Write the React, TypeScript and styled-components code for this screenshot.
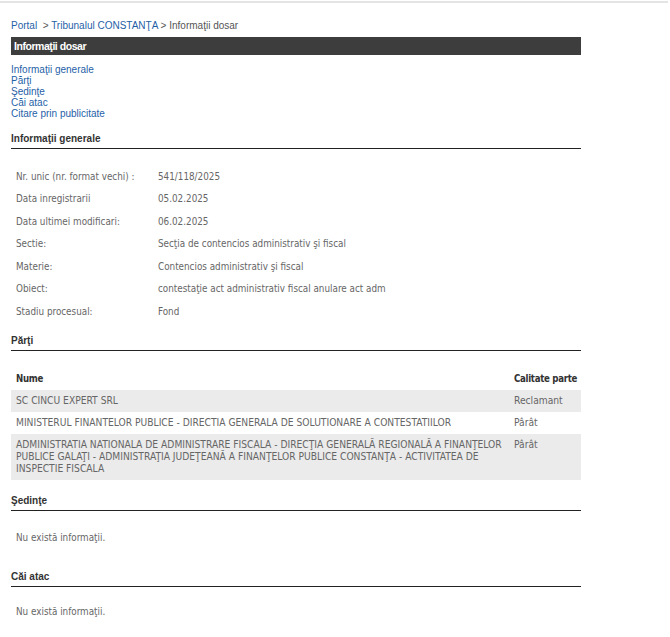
import React from "react";
import styled, { createGlobalStyle } from "styled-components";

const Global = createGlobalStyle`
  html, body { margin: 0; padding: 0; background: #ffffff; }
  body { font-family: "Liberation Sans", Arial, sans-serif; }
`;

const TopRule = styled.div`
  margin-top: 1px;
  width: 668px;
  height: 2px;
  background: #e4e4e4;
`;

const Page = styled.div`
  width: 570px;
  margin-left: 11px;
`;

const Breadcrumb = styled.div`
  margin-top: 16px;
  font-size: 10px;
  line-height: 13px;
  color: #555;
`;

const Link = styled.a`
  color: #1f5fa8;
  text-decoration: none;
`;

const TitleBar = styled.div`
  margin-top: 5px;
  height: 18px;
  line-height: 18px;
  background: #3d3d3d;
  color: #fff;
  font-weight: bold;
  font-size: 10.5px;
  letter-spacing: -0.45px;
  padding-left: 3px;
`;

const NavList = styled.div`
  margin-top: 9px;
  display: flex;
  flex-direction: column;
  font-size: 10px;
  line-height: 11px;
`;

const SectionHeading = styled.div<{ $gap: number }>`
  margin-top: ${(p) => p.$gap}px;
  font-size: 10px;
  line-height: 13px;
  font-weight: bold;
  color: #333;
  padding-bottom: 3px;
  border-bottom: 1px solid #222;
`;

const tahoma = `"DejaVu Sans Condensed", "DejaVu Sans", Verdana, sans-serif`;

const InfoTable = styled.div`
  margin-top: 16px;
  display: flex;
  flex-direction: column;
  font-family: ${tahoma};
  font-size: 9.8px;
  color: #666;
`;

const InfoRow = styled.div`
  display: grid;
  grid-template-columns: 142px 1fr;
  height: 22.5px;
  align-items: center;
  padding-left: 5px;
`;

const PartyTable = styled.div`
  margin-top: 16px;
  display: flex;
  flex-direction: column;
  font-family: ${tahoma};
  font-size: 10.2px;
  color: #666;
`;

const PartyRow = styled.div<{ $shade?: boolean; $head?: boolean }>`
  display: grid;
  grid-template-columns: 498px 1fr;
  background: ${(p) => (p.$shade ? "#ebebeb" : "transparent")};
  color: ${(p) => (p.$head ? "#333" : "#666")};
  font-weight: ${(p) => (p.$head ? "bold" : "normal")};
  line-height: 12px;
  padding: ${(p) => (p.$head ? "6px 0 5px" : "5px 0")};
`;

const Cell = styled.div`
  padding-left: 5px;
  padding-right: 4px;
`;

const HeadCell = styled(Cell)`
  white-space: nowrap;
  font-size: 9.6px;
  letter-spacing: -0.3px;
`;

const EmptyNote = styled.div<{ $gap: number }>`
  margin-top: ${(p) => p.$gap}px;
  padding-left: 5px;
  font-family: ${tahoma};
  font-size: 9.8px;
  line-height: 13px;
  color: #666;
`;

const info: [string, string][] = [
  ["Nr. unic (nr. format vechi) :", "541/118/2025"],
  ["Data inregistrarii", "05.02.2025"],
  ["Data ultimei modificari:", "06.02.2025"],
  ["Sectie:", "Secţia de contencios administrativ şi fiscal"],
  ["Materie:", "Contencios administrativ şi fiscal"],
  ["Obiect:", "contestaţie act administrativ fiscal anulare act adm"],
  ["Stadiu procesual:", "Fond"],
];

const parties: [string, string][] = [
  ["SC CINCU EXPERT SRL", "Reclamant"],
  [
    "MINISTERUL FINANTELOR PUBLICE - DIRECTIA GENERALA DE SOLUTIONARE A CONTESTATIILOR",
    "Pârât",
  ],
  [
    "ADMINISTRATIA NATIONALA DE ADMINISTRARE FISCALA - DIRECŢIA GENERALĂ REGIONALĂ A FINANŢELOR PUBLICE GALAŢI - ADMINISTRAŢIA JUDEŢEANĂ A FINANŢELOR PUBLICE CONSTANŢA - ACTIVITATEA DE INSPECTIE FISCALA",
    "Pârât",
  ],
];

export default function App() {
  return (
    <>
      <Global />
      <TopRule />
      <Page>
        <Breadcrumb>
          <Link href="#">Portal</Link>&nbsp; &gt; <Link href="#">Tribunalul CONSTANŢA</Link> &gt; Informaţii dosar
        </Breadcrumb>
        <TitleBar>Informaţii dosar</TitleBar>
        <NavList>
          <Link href="#">Informaţii generale</Link>
          <Link href="#">Părţi</Link>
          <Link href="#">Şedinţe</Link>
          <Link href="#">Căi atac</Link>
          <Link href="#">Citare prin publicitate</Link>
        </NavList>

        <SectionHeading $gap={13}>Informaţii generale</SectionHeading>
        <InfoTable>
          {info.map(([k, v]) => (
            <InfoRow key={k}>
              <span>{k}</span>
              <span>{v}</span>
            </InfoRow>
          ))}
        </InfoTable>

        <SectionHeading $gap={11}>Părţi</SectionHeading>
        <PartyTable>
          <PartyRow $head>
            <HeadCell>Nume</HeadCell>
            <HeadCell>Calitate parte</HeadCell>
          </PartyRow>
          {parties.map(([n, c], i) => (
            <PartyRow key={n} $shade={i % 2 === 0}>
              <Cell>{n}</Cell>
              <Cell>{c}</Cell>
            </PartyRow>
          ))}
        </PartyTable>

        <SectionHeading $gap={14}>Şedinţe</SectionHeading>
        <EmptyNote $gap={20}>Nu există informaţii.</EmptyNote>

        <SectionHeading $gap={26}>Căi atac</SectionHeading>
        <EmptyNote $gap={18}>Nu există informaţii.</EmptyNote>
      </Page>
    </>
  );
}
